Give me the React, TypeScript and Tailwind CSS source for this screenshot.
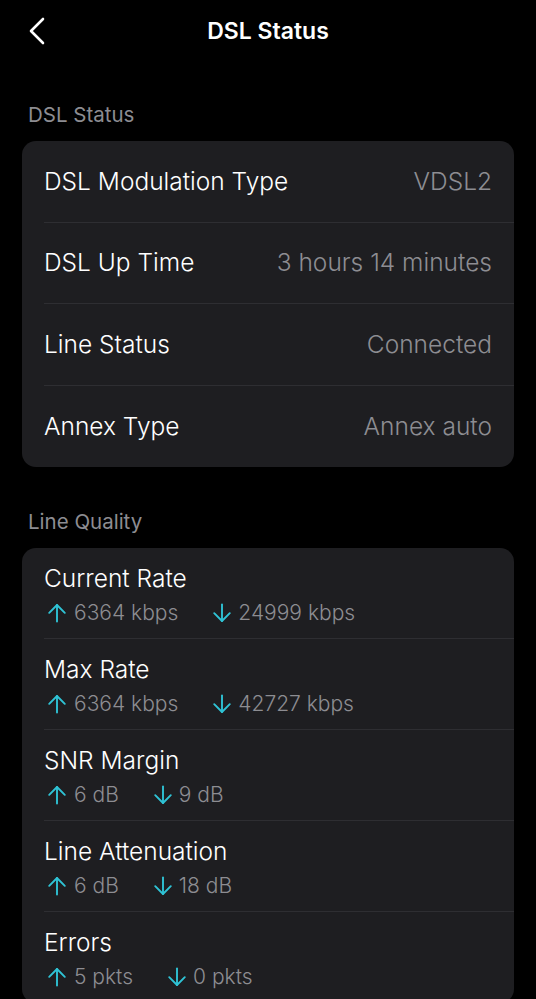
import React from "react";

const statusRows = [
  { label: "DSL Modulation Type", value: "VDSL2" },
  { label: "DSL Up Time", value: "3 hours 14 minutes" },
  { label: "Line Status", value: "Connected" },
  { label: "Annex Type", value: "Annex auto" },
];

const qualityRows = [
  { label: "Current Rate", up: "6364 kbps", down: "24999 kbps" },
  { label: "Max Rate", up: "6364 kbps", down: "42727 kbps" },
  { label: "SNR Margin", up: "6 dB", down: "9 dB" },
  { label: "Line Attenuation", up: "6 dB", down: "18 dB" },
  { label: "Errors", up: "5 pkts", down: "0 pkts" },
];

const Arrow = ({ down }: { down?: boolean }) => (
  <svg
    width="20"
    height="20"
    viewBox="0 0 20 20"
    fill="none"
    stroke="#2fc3d5"
    strokeWidth="1.9"
    strokeLinecap="round"
    strokeLinejoin="round"
    className={down ? "rotate-180" : ""}
  >
    <path d="M10 18.5V2" />
    <path d="M2.2 9.8L10 2L17.8 9.8" />
  </svg>
);

const App = () => {
  return (
    <div
      className="min-h-[999px] bg-black text-white"
      style={{ fontFamily: "Inter, 'Noto Sans', sans-serif" }}
    >
      <div className="relative flex h-[62px] items-center justify-center">
        <button className="absolute left-[28px] top-[16px]">
          <svg width="20" height="30" viewBox="0 0 20 30" fill="none">
            <path
              d="M15 3L3 15L15 27"
              stroke="white"
              strokeWidth="2.6"
              strokeLinecap="round"
              strokeLinejoin="round"
            />
          </svg>
        </button>
        <h1 className="text-[23px] font-semibold">DSL Status</h1>
      </div>

      <div className="px-[22px]">
        <p className="mt-[40px] pl-[6px] text-[20.5px] leading-[26px] text-[#8d8d92]">
          DSL Status
        </p>
        <div className="mt-[13px] overflow-hidden rounded-[14px] bg-[#1e1e21]">
          {statusRows.map((row, i) => (
            <div key={row.label} className="pl-[22px]">
              <div
                className={`flex h-[81.5px] items-center justify-between pr-[22px] ${
                  i < statusRows.length - 1 ? "border-b border-[#2e2e32]" : ""
                }`}
              >
                <span className="text-[24.5px] font-light">{row.label}</span>
                <span className="text-[24.5px] font-light text-[#8d8d92]">{row.value}</span>
              </div>
            </div>
          ))}
        </div>

        <p className="mt-[42px] pl-[6px] text-[20.5px] leading-[26px] text-[#8d8d92]">
          Line Quality
        </p>
        <div className="mt-[13px] overflow-hidden rounded-[14px] bg-[#1e1e21]">
          {qualityRows.map((row, i) => (
            <div key={row.label} className="pl-[22px]">
              <div
                className={`h-[91px] pt-[15px] ${
                  i < qualityRows.length - 1 ? "border-b border-[#2e2e32]" : ""
                }`}
              >
                <div className="text-[24.5px] font-light leading-[30px]">{row.label}</div>
                <div className="mt-[6px] flex items-center text-[21px] font-light leading-[28px] text-[#8d8d92]">
                  <span className="flex items-center gap-[7px] pl-[3px]">
                    <Arrow />
                    {row.up}
                  </span>
                  <span className="ml-[34px] flex items-center gap-[6px]">
                    <Arrow down />
                    {row.down}
                  </span>
                </div>
              </div>
            </div>
          ))}
        </div>
      </div>
    </div>
  );
};

export default App;
